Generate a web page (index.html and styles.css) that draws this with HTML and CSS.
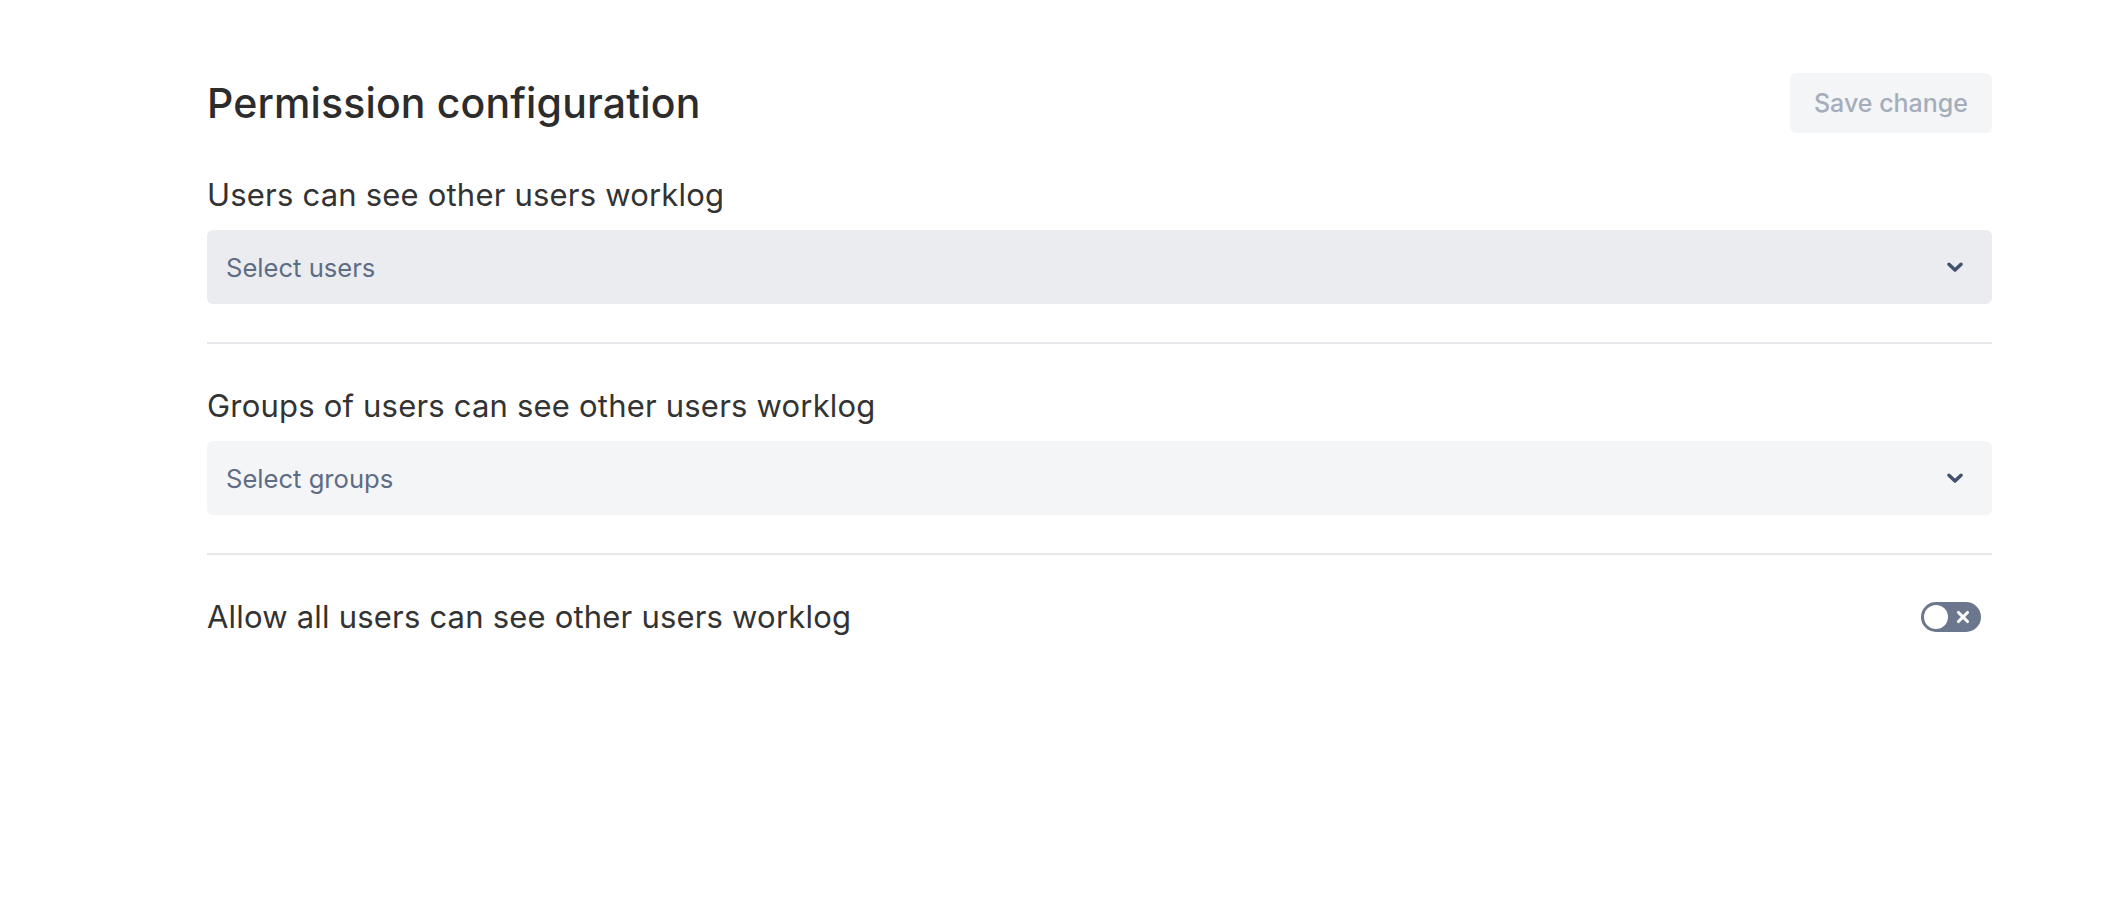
FILE: index.html
```html
<!DOCTYPE html>
<html lang="en">
<head>
<meta charset="utf-8">
<title>Permission configuration</title>
<link rel="stylesheet" href="styles.css">
</head>
<body>
<main class="page">
  <header class="header">
    <h1 class="title">Permission configuration</h1>
    <button class="save-btn" type="button" disabled>Save change</button>
  </header>

  <section class="field">
    <label class="field-label">Users can see other users worklog</label>
    <div class="select select-active">
      <span class="select-placeholder">Select users</span>
      <svg class="chevron" viewBox="0 0 20 20" aria-hidden="true"><path d="M4.5 7.5l5.5 5.2 5.5-5.2" fill="none" stroke="currentColor" stroke-width="3.2" stroke-linecap="round" stroke-linejoin="round"/></svg>
    </div>
  </section>

  <hr class="divider">

  <section class="field">
    <label class="field-label">Groups of users can see other users worklog</label>
    <div class="select">
      <span class="select-placeholder">Select groups</span>
      <svg class="chevron" viewBox="0 0 20 20" aria-hidden="true"><path d="M4.5 7.5l5.5 5.2 5.5-5.2" fill="none" stroke="currentColor" stroke-width="3.2" stroke-linecap="round" stroke-linejoin="round"/></svg>
    </div>
  </section>

  <hr class="divider">

  <section class="toggle-row">
    <span class="field-label toggle-label">Allow all users can see other users worklog</span>
    <span class="toggle">
      <span class="toggle-knob"></span>
      <svg class="toggle-x" viewBox="0 0 12 12" aria-hidden="true"><path d="M2.6 2.6l6.8 6.8M9.4 2.6l-6.8 6.8" stroke="#fff" stroke-width="2.3" stroke-linecap="round"/></svg>
    </span>
  </section>
</main>
</body>
</html>
```

FILE: styles.css
```css
* { box-sizing: border-box; }

html, body {
  margin: 0;
  padding: 0;
  background: #ffffff;
}

body {
  font-family: Inter, "Noto Sans", Roboto, sans-serif;
  color: #333333;
}

.page {
  width: 1785px;
  margin-left: 207px;
  padding-top: 73px;
}

.header {
  display: flex;
  align-items: center;
  justify-content: space-between;
  height: 60px;
}

.title {
  margin: 0;
  font-size: 41px;
  font-weight: 500;
  letter-spacing: 0.15px;
  color: #2c2c2c;
  line-height: 60px;
}

.save-btn {
  height: 60px;
  width: 202px;
  border: none;
  border-radius: 6px;
  background: #f4f5f7;
  color: #a5adba;
  font-family: inherit;
  font-size: 25px;
  font-weight: 500;
  padding: 0;
}

.field {
  display: flex;
  flex-direction: column;
  gap: 15px;
  padding-top: 42px;
}

.field-label {
  display: block;
  font-size: 31px;
  line-height: 40px;
  color: #333333;
  letter-spacing: 0.2px;
}

.select {
  height: 74px;
  border-radius: 6px;
  background: #f4f5f7;
  display: flex;
  align-items: center;
  justify-content: space-between;
  padding: 0 26px 0 19px;
}

.select-active { background: #ebecf0; }

.select-placeholder {
  font-size: 25.6px;
  color: #5e6c84;
}

.chevron {
  width: 22px;
  height: 22px;
  color: #42526e;
}

.divider {
  border: none;
  height: 2px;
  background: #e6e7ea;
  margin: 38px 0 0 0;
}

.toggle-row {
  display: flex;
  align-items: center;
  justify-content: space-between;
  padding-top: 42px;
  padding-right: 11px;
}

.toggle {
  position: relative;
  width: 60px;
  height: 30px;
  border-radius: 15px;
  background: #6b778c;
  display: flex;
  align-items: center;
  justify-content: flex-end;
  padding-right: 10px;
}

.toggle-knob {
  position: absolute;
  left: 3px;
  top: 3px;
  width: 24px;
  height: 24px;
  border-radius: 50%;
  background: #ffffff;
}

.toggle-x {
  width: 16px;
  height: 16px;
}
```
